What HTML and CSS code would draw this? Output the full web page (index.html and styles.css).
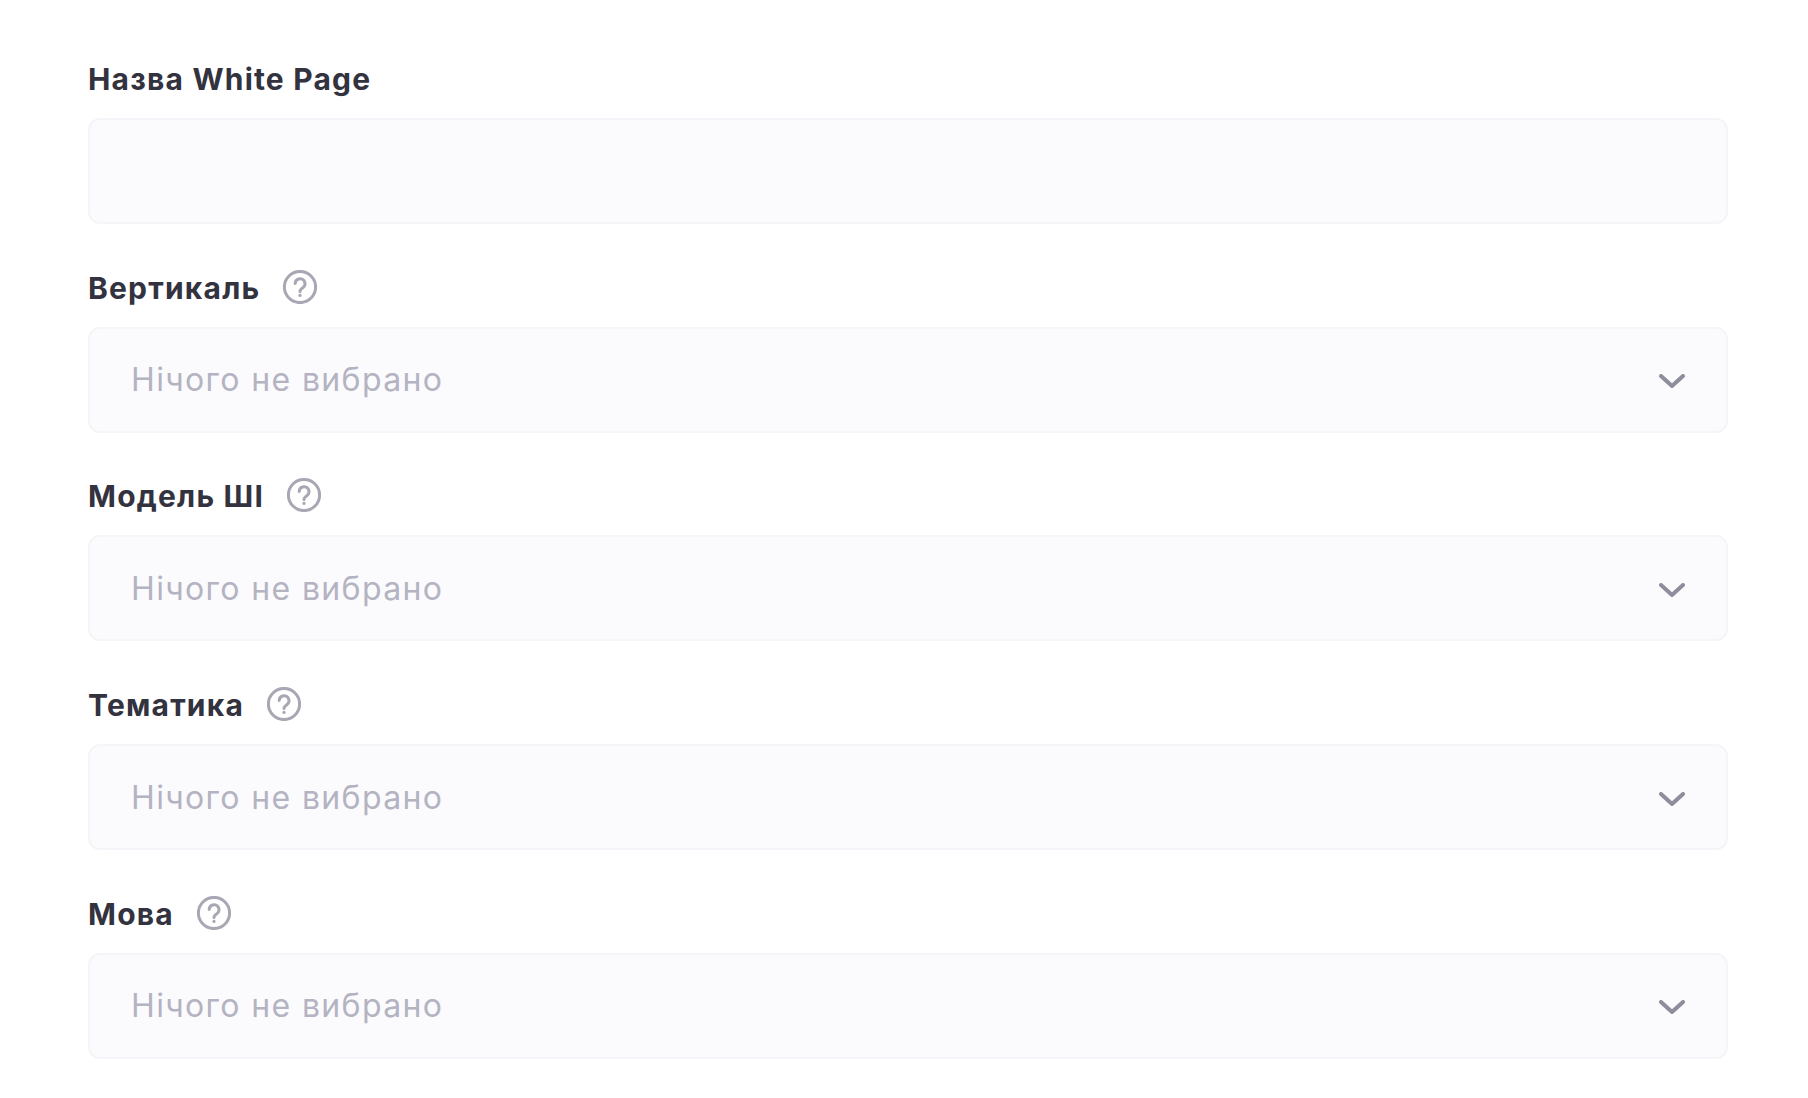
FILE: index.html
```html
<!DOCTYPE html>
<html lang="uk">
<head>
<meta charset="utf-8">
<title>White Page</title>
<link rel="stylesheet" href="styles.css">
</head>
<body>
<form class="form">
  <div class="field">
    <div class="label-row"><span class="label">Назва White Page</span></div>
    <div class="control"></div>
  </div>
  <div class="field">
    <div class="label-row"><span class="label">Вертикаль</span>
      <svg class="help" viewBox="0 0 34 34"><circle cx="17" cy="17" r="15.6"/><path d="M12.2 13.6a4.9 4.9 0 1 1 7.6 4.1c-1.9 1.2-2.8 2.1-2.8 3.9"/><circle class="dot" cx="17" cy="25.4" r="1.6"/></svg></div>
    <div class="control"><span class="placeholder">Нічого не вибрано</span>
      <svg class="chevron" viewBox="0 0 26 14"><path d="M2 2l11 10L24 2"/></svg></div>
  </div>
  <div class="field">
    <div class="label-row"><span class="label">Модель ШІ</span>
      <svg class="help" viewBox="0 0 34 34"><circle cx="17" cy="17" r="15.6"/><path d="M12.2 13.6a4.9 4.9 0 1 1 7.6 4.1c-1.9 1.2-2.8 2.1-2.8 3.9"/><circle class="dot" cx="17" cy="25.4" r="1.6"/></svg></div>
    <div class="control"><span class="placeholder">Нічого не вибрано</span>
      <svg class="chevron" viewBox="0 0 26 14"><path d="M2 2l11 10L24 2"/></svg></div>
  </div>
  <div class="field">
    <div class="label-row"><span class="label">Тематика</span>
      <svg class="help" viewBox="0 0 34 34"><circle cx="17" cy="17" r="15.6"/><path d="M12.2 13.6a4.9 4.9 0 1 1 7.6 4.1c-1.9 1.2-2.8 2.1-2.8 3.9"/><circle class="dot" cx="17" cy="25.4" r="1.6"/></svg></div>
    <div class="control"><span class="placeholder">Нічого не вибрано</span>
      <svg class="chevron" viewBox="0 0 26 14"><path d="M2 2l11 10L24 2"/></svg></div>
  </div>
  <div class="field">
    <div class="label-row"><span class="label">Мова</span>
      <svg class="help" viewBox="0 0 34 34"><circle cx="17" cy="17" r="15.6"/><path d="M12.2 13.6a4.9 4.9 0 1 1 7.6 4.1c-1.9 1.2-2.8 2.1-2.8 3.9"/><circle class="dot" cx="17" cy="25.4" r="1.6"/></svg></div>
    <div class="control"><span class="placeholder">Нічого не вибрано</span>
      <svg class="chevron" viewBox="0 0 26 14"><path d="M2 2l11 10L24 2"/></svg></div>
  </div>
</form>
</body>
</html>
```
FILE: styles.css
```css
* { box-sizing: border-box; }
html, body { margin: 0; height: 100%; background: #fff; }
body { overflow: hidden; font-family: "Inter", "Liberation Sans", sans-serif; }
.form {
  display: flex;
  flex-direction: column;
  gap: 45.7px;
  padding: 61px 80px 0 88px;
}
.field { display: flex; flex-direction: column; gap: 21px; }
.label-row { display: flex; align-items: center; gap: 23px; height: 36px; }
.label {
  font-size: 30px;
  line-height: 36px;
  font-weight: 650;
  letter-spacing: 1.2px;
  color: #33323f;
  white-space: nowrap;
}
.control {
  display: flex;
  align-items: center;
  justify-content: space-between;
  height: 106px;
  padding: 0 41px;
  background: #fbfbfd;
  border: 2px solid #f5f5f9;
  border-radius: 12px;
}
.placeholder {
  font-size: 32px;
  font-weight: 400;
  color: #b4b3c2;
  white-space: nowrap;
  letter-spacing: 1.35px;
}
.help { width: 34px; height: 34px; flex: none; margin-bottom: 2px; fill: none; stroke: #a8a7b4; stroke-width: 3; stroke-linecap: round; }
.help .dot { fill: #a8a7b4; stroke: none; }
.chevron { width: 26px; height: 14px; flex: none; margin-top: 3px; fill: none; stroke: #8e8d9c; stroke-width: 4; stroke-linecap: round; stroke-linejoin: round; }
```
